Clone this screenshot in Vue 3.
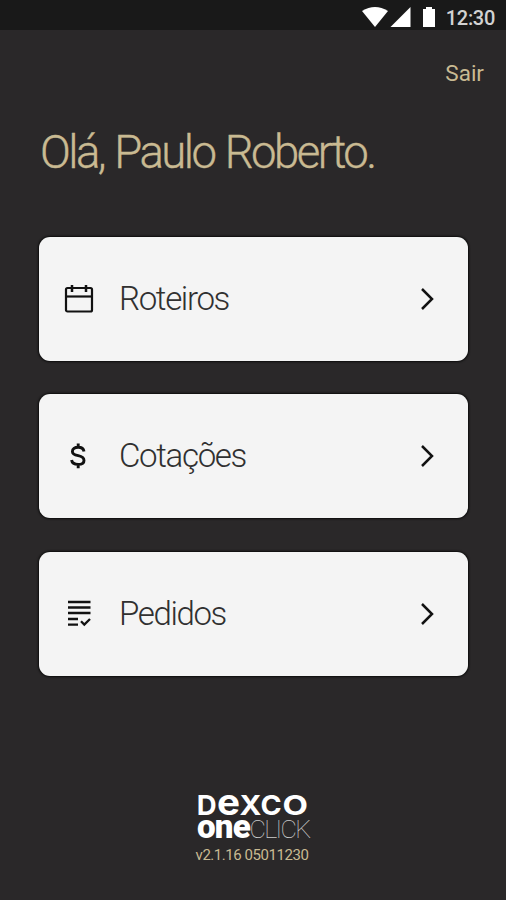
<script setup>
const items = [
  { label: 'Roteiros', icon: 'calendar', width: 110 },
  { label: 'Cotações', icon: 'money', width: 127 },
  { label: 'Pedidos', icon: 'list', width: 107 },
]
</script>

<template>
  <div class="screen">
    <header class="status">
      <svg class="signals" width="76" height="24" viewBox="0 0 76 24">
        <path d="M0 4Q13 -4 26 4L13 20Z" transform="translate(0 7)" />
        <path d="M48.5 7V27H28.5Z" />
        <path d="M61 9H64V7H70V9H73V27H61Z" />
      </svg>
      <span class="clock">12:30</span>
    </header>
    <nav class="top"><a class="exit">Sair</a></nav>
    <h1 class="greeting">Olá, Paulo Roberto.</h1>
    <main class="menu">
      <button v-for="item in items" :key="item.label" class="card">
        <span class="icon">
          <svg v-if="item.icon === 'calendar'" width="30" height="30" viewBox="0 0 30 30" fill="none" stroke="#111" stroke-width="2.2">
            <rect x="2" y="4" width="26" height="23.5" rx="1.5" />
            <path d="M2 12.5H28" />
            <path d="M8 1V8M22 1V8" stroke-width="2.5" />
          </svg>
          <svg v-else-if="item.icon === 'money'" width="30" height="30" viewBox="0 0 30 30" fill="none" stroke="#111" stroke-width="2.9">
            <path d="M20 10.5C19.5 7.5 17.5 6.3 14.2 6.3C10.6 6.3 8.4 8.1 8.4 10.4C8.4 13.1 10.9 14 14.2 14.7C18 15.5 20 16.9 20 19.4C20 22.2 17.5 23.4 14.2 23.4C10.6 23.4 8 21.9 7.6 19M14.2 2.5V6.5M14.2 23.2V27.2" />
          </svg>
          <svg v-else width="30" height="30" viewBox="0 0 30 30" fill="none" stroke="#111" stroke-width="2.3">
            <path d="M4 3H26.5M4 8.5H26.5M4 14H26.5M4 20H14M4 25.7H14M17 22.3L20.3 25.6L26 20" />
          </svg>
        </span>
        <svg class="label" width="150" height="48">
          <text x="0" y="35" :textLength="item.width" lengthAdjust="spacingAndGlyphs">{{ item.label }}</text>
        </svg>
        <svg class="chevron" width="16" height="24" viewBox="0 0 16 24">
          <path d="M3 2L13 12L3 22" />
        </svg>
      </button>
    </main>
    <footer class="footer">
      <svg class="brand" width="116" height="50" viewBox="0 0 116 50">
        <text class="dexco" transform="translate(1.8 23.7)" font-size="27.5">D</text>
        <text class="dexco" transform="translate(22 23.7) scale(1.06 1)" font-size="36.5">e</text>
        <text class="dexco" transform="translate(44.5 23.7) scale(1.08 1)" font-size="27.5">X</text>
        <text class="dexco" transform="translate(65.5 23.7) scale(1.04 1)" font-size="27.5">C</text>
        <text class="dexco" transform="translate(87.5 23.7) scale(1.2 1)" font-size="27.5">O</text>
        <text class="one" x="2" y="46.5" textLength="53" lengthAdjust="spacingAndGlyphs">one</text>
        <text class="click" x="54.5" y="46.5" textLength="60" lengthAdjust="spacingAndGlyphs">CLICK</text>
      </svg>
      <span class="version">v2.1.16 05011230</span>
    </footer>
  </div>
</template>

<style>
body { margin: 0; background: #2a2829; }
</style>

<style scoped>
.screen {
  width: 506px;
  height: 900px;
  overflow: hidden;
  display: flex;
  flex-direction: column;
  background: #2a2829;
  color: #c9ba92;
  font-family: Roboto, sans-serif;
}
.status {
  height: 30px;
  flex: none;
  display: flex;
  justify-content: flex-end;
  align-items: flex-start;
  padding-right: 11px;
  background: #191919;
}
.signals { fill: #fff; overflow: visible; margin-right: 8px; }
.clock { color: #d2d2d2; font-size: 20px; font-weight: 500; line-height: 36px; letter-spacing: -.3px; }
.top { height: 86px; box-sizing: border-box; flex: none; padding: 29px 22px 0 0; text-align: right; }
.exit { font-size: 22.5px; line-height: 28px; }
.greeting {
  margin: 0;
  height: 120.5px;
  flex: none;
  padding-left: 40px;
  box-sizing: border-box;
  font-size: 45.5px;
  font-weight: 300;
  line-height: 74px;
  letter-spacing: -2.55px;
  word-spacing: 1.8px;
  white-space: nowrap;
  -webkit-text-stroke: .35px #c9ba92;
}
.menu { display: flex; flex-direction: column; gap: 33.5px; padding: 0 38.5px 0 39px; }
.card {
  height: 124px;
  display: flex;
  align-items: center;
  padding: 0 33px 0 25px;
  border: 0;
  border-radius: 11px;
  background: #f4f4f4;
  box-shadow: 0 0 2px 1px #0c0c0c;
}
.icon { width: 30px; height: 30px; display: flex; margin-right: 25px; }
.label { overflow: visible; }
.label text { font-family: Roboto, sans-serif; font-size: 34px; font-weight: 300; letter-spacing: -1.4px; fill: #303030; }
.chevron { margin-left: auto; fill: none; stroke: #111; stroke-width: 2.5; }
.footer { display: flex; flex-direction: column; align-items: center; margin-top: 115px; }
.brand { overflow: visible; fill: #fff; }
.dexco { font-family: Inter, sans-serif; font-weight: 700; }
.one { font-family: Roboto, sans-serif; font-size: 33px; font-weight: 900; letter-spacing: -.8px; }
.click { font-family: Roboto, sans-serif; font-size: 26.5px; font-weight: 100; letter-spacing: -1.8px; fill: #ccc; }
.version { font-size: 15px; line-height: 20px; letter-spacing: -.45px; margin: 4px 2px 0 0; }
</style>
